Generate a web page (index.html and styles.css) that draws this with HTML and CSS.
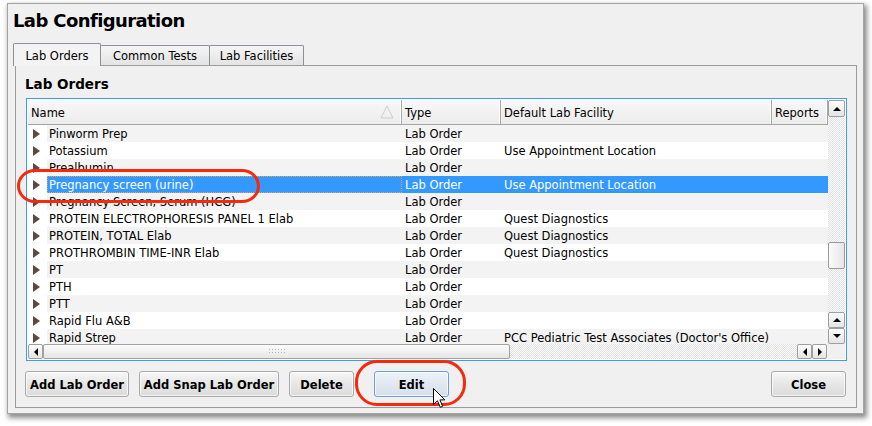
FILE: index.html
```html
<!DOCTYPE html>
<html>
<head>
<meta charset="utf-8">
<title>Lab Configuration</title>
<link rel="stylesheet" href="styles.css">
</head>
<body>
<div class="window">
  <div class="title">Lab Configuration</div>
  <div class="tabs">
    <div class="tab active">Lab Orders</div>
    <div class="tab t2">Common Tests</div>
    <div class="tab t3">Lab Facilities</div>
  </div>
  <div class="pane">
    <div class="heading">Lab Orders</div>
    <div class="tree">
      <div class="tree-body">
        <div class="viewport">
          <div class="hdr">
            <div class="hc">Name<svg class="sort" width="14" height="14" viewBox="0 0 14 14"><polyline points="1,13 7,1 13,13 1,13" fill="none" stroke="#cdcdcd" stroke-width="1"/></svg></div>
            <div class="hc">Type</div>
            <div class="hc">Default Lab Facility</div>
            <div class="hc">Reports</div>
          </div>
          <div class="row alt"><span class="exp"><i></i></span><span class="name">Pinworm Prep</span><span class="cell">Lab Order</span><span class="cell"></span><span class="cell"></span></div>
          <div class="row"><span class="exp"><i></i></span><span class="name">Potassium</span><span class="cell">Lab Order</span><span class="cell">Use Appointment Location</span><span class="cell"></span></div>
          <div class="row alt"><span class="exp"><i></i></span><span class="name">Prealbumin</span><span class="cell">Lab Order</span><span class="cell"></span><span class="cell"></span></div>
          <div class="row sel"><span class="exp"><i></i></span><span class="name">Pregnancy screen (urine)</span><span class="cell">Lab Order</span><span class="cell">Use Appointment Location</span><span class="cell"></span></div>
          <div class="row alt"><span class="exp"><i></i></span><span class="name">Pregnancy Screen, Serum (HCG)</span><span class="cell">Lab Order</span><span class="cell"></span><span class="cell"></span></div>
          <div class="row"><span class="exp"><i></i></span><span class="name">PROTEIN ELECTROPHORESIS PANEL 1 Elab</span><span class="cell">Lab Order</span><span class="cell">Quest Diagnostics</span><span class="cell"></span></div>
          <div class="row alt"><span class="exp"><i></i></span><span class="name">PROTEIN, TOTAL Elab</span><span class="cell">Lab Order</span><span class="cell">Quest Diagnostics</span><span class="cell"></span></div>
          <div class="row"><span class="exp"><i></i></span><span class="name">PROTHROMBIN TIME-INR Elab</span><span class="cell">Lab Order</span><span class="cell">Quest Diagnostics</span><span class="cell"></span></div>
          <div class="row alt"><span class="exp"><i></i></span><span class="name">PT</span><span class="cell">Lab Order</span><span class="cell"></span><span class="cell"></span></div>
          <div class="row"><span class="exp"><i></i></span><span class="name">PTH</span><span class="cell">Lab Order</span><span class="cell"></span><span class="cell"></span></div>
          <div class="row alt"><span class="exp"><i></i></span><span class="name">PTT</span><span class="cell">Lab Order</span><span class="cell"></span><span class="cell"></span></div>
          <div class="row"><span class="exp"><i></i></span><span class="name">Rapid Flu A&amp;B</span><span class="cell">Lab Order</span><span class="cell"></span><span class="cell"></span></div>
          <div class="row alt"><span class="exp"><i></i></span><span class="name">Rapid Strep</span><span class="cell">Lab Order</span><span class="cell">PCC Pediatric Test Associates (Doctor's Office)</span><span class="cell"></span></div>
        </div>
        <div class="vscroll">
          <div class="sbtn"><i class="ar-up"></i></div>
          <div class="vtrack"><div class="vthumb"></div></div>
          <div class="sbtn sm"><i class="ar-up"></i></div>
          <div class="sbtn sm"><i class="ar-down"></i></div>
        </div>
      </div>
      <div class="hscroll">
        <div class="sbtn hb"><i class="ar-left"></i></div>
        <div class="hthumb"><span class="grip"></span></div>
        <div class="htrack"></div>
        <div class="sbtn hb"><i class="ar-left"></i></div>
        <div class="sbtn hb"><i class="ar-right"></i></div>
        <div class="corner"></div>
      </div>
    </div>
    <div class="buttons">
      <div class="btn b1">Add Lab Order</div>
      <div class="btn b2">Add Snap Lab Order</div>
      <div class="btn b3">Delete</div>
      <div class="btn b4 default">Edit</div>
      <div class="btn b5">Close</div>
    </div>
  </div>
</div>
<div class="oval o1"></div>
<div class="oval o2"></div>
<svg class="cursor" width="14" height="21" viewBox="0 0 14 21"><polygon points="0.5,0.5 0.5,16.5 4.5,12.8 7.3,19.3 9.6,18.3 6.9,11.9 11.8,11.9" fill="#fff" stroke="#000" stroke-width="1" stroke-linejoin="miter"/></svg>
</body>
</html>
```

FILE: styles.css
```css
* { box-sizing: border-box; }

body {
  margin: 0;
  width: 872px;
  height: 426px;
  overflow: hidden;
  position: relative;
  background: #ffffff;
  font-family: "DejaVu Sans", "Noto Sans", sans-serif;
  font-size: 11.5px;
  color: #000;
}

.window {
  margin: 3px 0 0 7px;
  width: 857px;
  height: 411px;
  border: 1px solid #a4a4a4;
  background: #f0f0f0;
  box-shadow: 2px 3px 5px 1px rgba(0, 0, 0, 0.45);
  padding: 0 6px 5px 7px;
}

.title {
  margin: 6px 0 0 -2px;
  height: 22px;
  line-height: 22px;
  font-size: 18px;
  font-weight: bold;
  letter-spacing: -0.6px;
  white-space: nowrap;
}

.tabs {
  display: flex;
  align-items: flex-start;
  height: 23px;
  margin: 11px 0 -1px;
  position: relative;
  z-index: 1;
}

.tab {
  height: 20px;
  margin-top: 2px;
  margin-left: -1px;
  border: 1px solid #8f9096;
  border-bottom: none;
  border-radius: 2px 2px 0 0;
  background: linear-gradient(#f5f5f5, #e3e3e3);
  text-align: center;
  line-height: 19px;
  padding-top: 1px;
  white-space: nowrap;
}

.tab.active {
  width: 88px;
  height: 23px;
  margin-top: 0;
  margin-left: -2px;
  background: #f3f3f3;
  line-height: 22px;
}

.t2 { width: 110px; }
.t3 { width: 95px; }

.pane {
  height: 343px;
  border: 1px solid #9c9c9c;
  background: #f0f0f0;
  padding: 10px 9px 10px 10px;
}

.heading {
  height: 18px;
  line-height: 17px;
  font-size: 13.5px;
  font-weight: bold;
  margin-left: -1px;
}

.tree {
  margin-top: 4px;
  width: 821px;
  height: 263px;
  border: 1px solid #3d9bf5;
  padding: 1px;
  background: #fff;
  display: flex;
  flex-direction: column;
}

.tree-body {
  display: flex;
  height: 244px;
}

.viewport {
  width: 800px;
  height: 244px;
  overflow: hidden;
}

.hdr {
  display: grid;
  grid-template-columns: 374px 99px 271px 56px;
  height: 25px;
  border-bottom: 1px solid #a3a3a3;
  background: linear-gradient(#f8f8f8, #ececec);
}

.hc {
  position: relative;
  padding: 2px 0 0 3px;
  line-height: 23px;
  white-space: nowrap;
  overflow: hidden;
  border-right: 1px solid #a8a8a8;
  box-shadow: inset -1px 0 #ffffff;
}

.sort {
  position: absolute;
  right: 7px;
  top: 5px;
}

.row {
  display: grid;
  grid-template-columns: 19px 355px 99px 271px 56px;
  height: 17px;
  line-height: 15px;
  white-space: nowrap;
}

.row > span {
  overflow: hidden;
  padding-top: 2px;
  background: #ffffff;
}

.row.alt > span { background: #f3f3f3; }
.row > span.exp { background: #ffffff; padding-top: 0; }

.exp i {
  display: block;
  width: 0;
  height: 0;
  margin: 4px 0 0 5px;
  border-left: 7px solid #5c4944;
  border-top: 5px solid transparent;
  border-bottom: 5px solid transparent;
}

.name { padding-left: 2px; }
.cell { padding-left: 3px; }

.row.sel > span:not(.exp) {
  background: #3399ff;
  color: #ffffff;
}

.row.sel > span.name {
  outline: 1px dotted #e6a35a;
  outline-offset: -1px;
}

.vscroll {
  width: 17px;
  display: flex;
  flex-direction: column;
  background: repeating-conic-gradient(#e2e2e2 0 25%, #fbfbfb 0 50%) 0 0 / 2px 2px;
}

.sbtn {
  flex: none;
  height: 17px;
  border: 1px solid #9f9f9f;
  border-radius: 2px;
  background: linear-gradient(#fdfdfd, #e4e4e4);
  display: flex;
  align-items: center;
  justify-content: center;
}

.sbtn.sm { height: 16px; }

.vtrack {
  flex: 1;
}

.vthumb {
  margin-top: 125px;
  height: 27px;
  border: 1px solid #9a9a9a;
  border-radius: 2px;
  background: linear-gradient(90deg, #fbfbfb, #e6e6e6);
}

.ar-up, .ar-down, .ar-left, .ar-right {
  display: block;
  width: 0;
  height: 0;
}

.ar-up {
  border-left: 4px solid transparent;
  border-right: 4px solid transparent;
  border-bottom: 4px solid #000;
}

.ar-down {
  border-left: 4px solid transparent;
  border-right: 4px solid transparent;
  border-top: 4px solid #000;
}

.ar-left {
  border-top: 4px solid transparent;
  border-bottom: 4px solid transparent;
  border-right: 4px solid #000;
}

.ar-right {
  border-top: 4px solid transparent;
  border-bottom: 4px solid transparent;
  border-left: 4px solid #000;
}

.hscroll {
  display: flex;
  height: 15px;
  background: repeating-conic-gradient(#e2e2e2 0 25%, #fbfbfb 0 50%) 0 0 / 2px 2px;
}

.sbtn.hb {
  width: 15px;
  height: 15px;
}

.hthumb {
  width: 467px;
  border: 1px solid #a3a3a3;
  border-radius: 2px;
  background: linear-gradient(#fbfbfb, #e6e6e6);
  display: flex;
  align-items: center;
  justify-content: center;
}

.grip {
  width: 18px;
  height: 7px;
  background: radial-gradient(circle, #b5b5b5 0.8px, transparent 1px) 0 0 / 3px 3px;
}

.htrack { flex: 1; }

.corner {
  width: 18px;
  background: #f0f0f0;
}

.buttons {
  display: flex;
  height: 26px;
  margin: 10px 1px 0 -1px;
}

.btn {
  height: 26px;
  border: 1px solid #a9a9a9;
  border-radius: 3px;
  background: linear-gradient(#f7f7f7, #e6e6e6 50%, #dcdcdc);
  box-shadow: inset 0 0 0 1px rgba(255, 255, 255, 0.7);
  font-weight: bold;
  text-align: center;
  line-height: 24px;
  padding-top: 1px;
  white-space: nowrap;
}

.b1 { width: 104px; }
.b2 { width: 140px; margin-left: 10px; }
.b3 { width: 65px; margin-left: 10px; }
.b4 { width: 75px; margin-left: 20px; }
.b5 { width: 75px; margin-left: auto; }

.btn.default {
  border-color: #6e9fd2;
  background: linear-gradient(#eef3f9, #e1e8f1 50%, #d6dfea);
}

.oval {
  position: absolute;
  border: 3.5px solid #f6290b;
}

.o1 {
  left: 17px;
  top: 169px;
  width: 243px;
  height: 34px;
  border-radius: 18px / 17px;
}

.o2 {
  left: 355px;
  top: 360px;
  width: 111px;
  height: 46px;
  border-radius: 22px;
}

.cursor {
  position: absolute;
  left: 433px;
  top: 388px;
}
```
